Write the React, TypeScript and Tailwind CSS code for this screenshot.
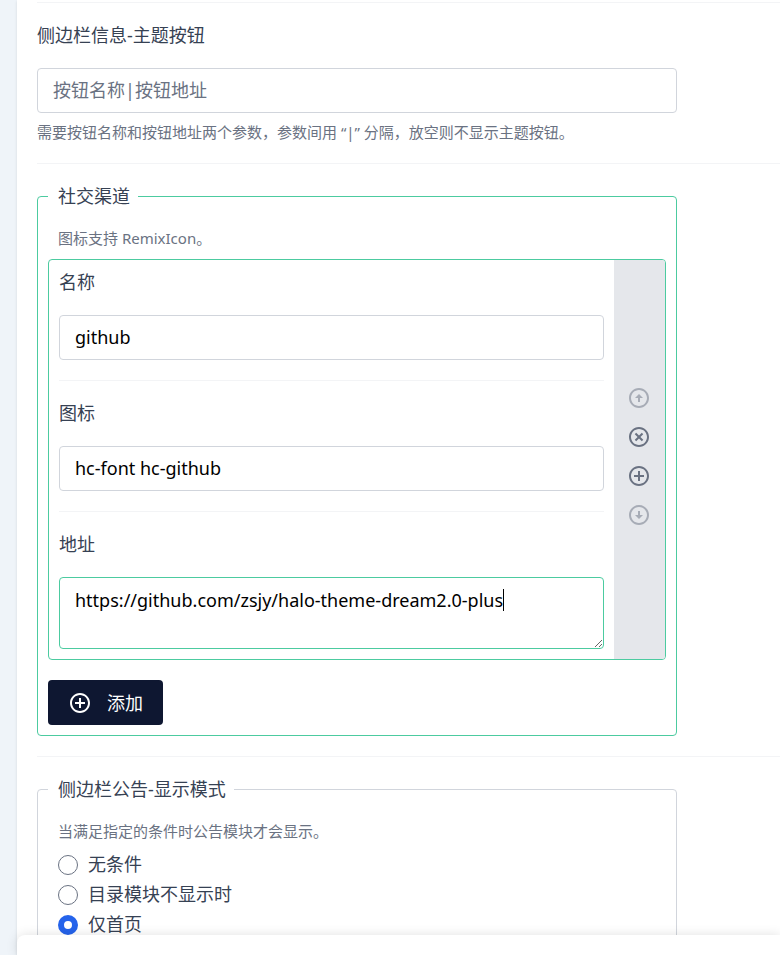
import { useState, type ReactNode } from "react";
import {
  RiAddCircleLine,
  RiArrowDownCircleLine,
  RiArrowUpCircleLine,
  RiCloseCircleLine,
} from "react-icons/ri";

const inputClass =
  "block h-[45px] w-full rounded border border-gray-300 bg-white px-[15px] pb-[2px] text-black outline-none placeholder:text-gray-500 focus:border-[#4ccba0]";

const labelClass = "mb-[21px] block";

function Help({ children, id }: { children: ReactNode; id?: string }) {
  return (
    <p id={id} className="text-[15px] leading-[22px] text-gray-500">
      {children}
    </p>
  );
}

function Group({ title, active, children }: { title: string; active?: boolean; children: ReactNode }) {
  return (
    <fieldset
      className={`max-w-[640px] rounded border px-[10px] pb-[10px] ${active ? "border-[#4ccba0]" : "border-gray-300"}`}
    >
      <legend className="pr-2 pl-[10px]">{title}</legend>
      {children}
    </fieldset>
  );
}

const modes = ["无条件", "目录模块不显示时", "仅首页"];

export default function App() {
  const [mode, setMode] = useState("仅首页");
  return (
    <div className="flex h-screen overflow-hidden bg-[#eff4f9] pl-[17px] font-['Noto_Sans','Noto_Sans_CJK_SC',sans-serif] text-[18px] leading-6 text-gray-700">
      <main className="flex min-w-0 flex-1 flex-col bg-white shadow">
        <form className="min-h-0 flex-1 divide-y divide-gray-100 overflow-hidden pl-5" onSubmit={(e) => e.preventDefault()}>
          <div className="h-[3px]" />
          <div className="py-5">
            <div className="max-w-[640px]">
              <label htmlFor="theme-button" className={labelClass}>
                侧边栏信息-主题按钮
              </label>
              <input id="theme-button" className={inputClass} placeholder="按钮名称|按钮地址" aria-describedby="theme-help" />
              <div className="mt-2">
                <Help id="theme-help">需要按钮名称和按钮地址两个参数，参数间用 “|” 分隔，放空则不显示主题按钮。</Help>
              </div>
            </div>
          </div>

          <div className="py-5">
            <Group title="社交渠道" active>
              <div className="px-[10px] pt-[19px] pb-[10px]">
                <Help>图标支持 RemixIcon。</Help>
              </div>
              <div className="flex overflow-hidden rounded border border-[#4ccba0]">
                <div className="min-w-0 flex-1 divide-y divide-gray-100 px-[10px]">
                  <div className="pt-[10px] pb-5">
                    <label htmlFor="name" className={labelClass}>名称</label>
                    <input id="name" className={inputClass} defaultValue="github" />
                  </div>
                  <div className="py-5">
                    <label htmlFor="icon" className={labelClass}>图标</label>
                    <input id="icon" className={inputClass} defaultValue="hc-font hc-github" />
                  </div>
                  <div className="pt-5 pb-[10px]">
                    <label htmlFor="url" className={labelClass}>地址</label>
                    <div className="relative">
                      <textarea
                        id="url"
                        className="block h-[72px] w-full rounded border border-[#4ccba0] bg-white px-[15px] py-[10px] text-black outline-none"
                        defaultValue="https://github.com/zsjy/halo-theme-dream2.0-plus"
                      />
                      <span className="absolute top-3 left-[444px] h-[22px] w-px bg-black" />
                    </div>
                  </div>
                </div>
                <div className="flex w-[51px] flex-col items-center justify-center gap-[15px] bg-gray-200 pr-[2px] pb-[6px] text-gray-500">
                  <button type="button" aria-label="上移" disabled className="opacity-50">
                    <RiArrowUpCircleLine size={24} />
                  </button>
                  <button type="button" aria-label="删除">
                    <RiCloseCircleLine size={24} />
                  </button>
                  <button type="button" aria-label="插入">
                    <RiAddCircleLine size={24} />
                  </button>
                  <button type="button" aria-label="下移" disabled className="opacity-50">
                    <RiArrowDownCircleLine size={24} />
                  </button>
                </div>
              </div>
              <button type="button" className="mt-5 flex h-[45px] items-center gap-[15px] rounded bg-[#0e1731] px-5 text-white">
                <RiAddCircleLine size={24} />
                添加
              </button>
            </Group>
          </div>

          <div className="py-5">
            <Group title="侧边栏公告-显示模式">
              <div className="px-[10px] pt-[19px]">
                <Help>当满足指定的条件时公告模块才会显示。</Help>
                <div className="mt-2">
                  {modes.map((m) => (
                    <label key={m} className="flex h-[30px] items-center gap-[10px]">
                      <input
                        type="radio"
                        name="mode"
                        checked={mode === m}
                        onChange={() => setMode(m)}
                        className="size-5 appearance-none rounded-full border border-gray-500 bg-white checked:border-[6px] checked:border-[#2563eb]"
                      />
                      <span className="pb-[2px]">{m}</span>
                    </label>
                  ))}
                </div>
              </div>
            </Group>
          </div>
        </form>
        <footer className="relative h-5 shrink-0 rounded-tl-lg bg-white shadow-[0_0_12px_rgba(0,0,0,0.12)]" />
      </main>
    </div>
  );
}
